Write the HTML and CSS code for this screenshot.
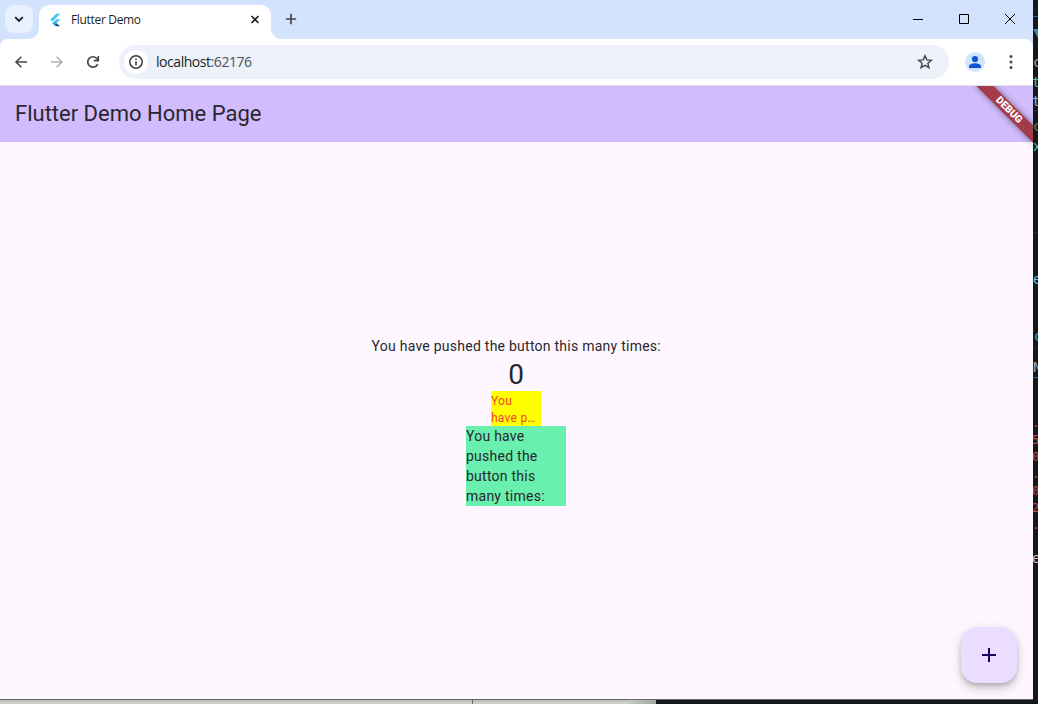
FILE: index.html
```
<!DOCTYPE html>
<html lang="en">
<head>
<meta charset="utf-8">
<title>Flutter Demo</title>
<link rel="stylesheet" href="styles.css">
</head>
<body>
<div class="desktop">
  <div class="window">
    <div class="tabstrip">
      <div class="tab-search"><svg width="28" height="28" viewBox="0 0 28 28"><path d="M10.2 12.2 14 16l3.8-3.8" fill="none" stroke="#1f1f1f" stroke-width="1.9"/></svg></div>
      <div class="tab">
        <svg class="favicon" width="16" height="16" viewBox="0 0 16 16"><path d="M9.3 1.7h4L5.4 9.6l-2-2z" fill="#42c5f5"/><path d="M9.3 7.2h4l-4 4-2-2z" fill="#42c5f5"/><path d="m5.4 11.2 2-2 2 2-2 2z" fill="#24a5e8"/><path d="m7.4 13.2 2-2 3.9 3.1h-4z" fill="#08539c"/></svg>
        <span class="tab-title">Flutter Demo</span>
        <svg class="tab-close" width="16" height="16" viewBox="0 0 16 16"><path d="m4.5 4 7 7m0-7-7 7" stroke="#1f1f1f" stroke-width="1.6"/></svg>
        <i class="flare flare-left"></i><i class="flare flare-right"></i>
      </div>
      <svg class="new-tab" width="16" height="16" viewBox="0 0 16 16"><path d="M8 2.8v10.4M2.8 8h10.4" stroke="#474747" stroke-width="1.7"/></svg>
      <svg class="controls" width="138" height="39" viewBox="0 0 138 39" fill="none" stroke="#000"><path d="M18 19.5h10M64.5 14.5h9v9h-9zM110 14l10 10m0-10-10 10"/></svg>
    </div>
    <div class="toolbar">
      <svg class="nav" width="16" height="16" viewBox="0 0 16 16"><path d="M14 8H3m5.4-5.3L3 8l5.4 5.3" fill="none" stroke="#474747" stroke-width="1.6"/></svg>
      <svg class="nav" width="16" height="16" viewBox="0 0 16 16"><path d="M2 8h11M7.6 2.7 13 8l-5.4 5.3" fill="none" stroke="#b0b0b0" stroke-width="1.6"/></svg>
      <svg class="nav" width="16" height="16" viewBox="0 0 16 16"><path d="M12.7 10.1a5.2 5.2 0 1 1-.6-5.3l.9 1.2" fill="none" stroke="#474747" stroke-width="1.7"/><path d="M13.3 2v4.6H8.8" fill="none" stroke="#474747" stroke-width="1.6"/></svg>
      <div class="omnibox">
        <div class="site-info"><svg width="16" height="16" viewBox="0 0 16 16"><circle cx="8" cy="8" r="6.2" fill="none" stroke="#3c3c3c" stroke-width="1.5"/><path d="M7.2 7.3h1.6v4H7.2zM7.2 4.5h1.6V6H7.2z" fill="#3c3c3c"/></svg></div>
        <span class="url">localhost<span class="port">:62176</span></span>
        <svg class="star" width="18" height="18" viewBox="0 0 18 18"><path d="m9 2.8 1.8 4.1 4.5.4-3.4 3 1 4.3L9 12.3l-3.9 2.3 1-4.3-3.4-3 4.5-.4z" fill="none" stroke="#474747" stroke-width="1.5"/></svg>
      </div>
      <svg class="avatar" width="20" height="20" viewBox="0 0 20 20"><circle cx="10" cy="10" r="10" fill="#d3e3fd"/><circle cx="10" cy="7" r="3.1" fill="#0b57d0"/><path d="M4 16v-1.5c0-2.2 3.5-3.3 6-3.3s6 1.1 6 3.3V16z" fill="#0b57d0"/></svg>
      <svg class="menu" width="16" height="16" viewBox="0 0 16 16" fill="#474747"><circle cx="8" cy="2.6" r="1.5"/><circle cx="8" cy="8" r="1.5"/><circle cx="8" cy="13.4" r="1.5"/></svg>
    </div>
    <div class="page">
      <header class="appbar">Flutter Demo Home Page</header>
      <main class="content">
        <p class="label">You have pushed the button this many times:</p>
        <p class="counter">0</p>
        <p class="yellow">You<br>have p…</p>
        <p class="green">You have<br>pushed the<br>button this<br>many times:</p>
      </main>
      <div class="banner">DEBUG</div>
      <div class="fab"><svg width="24" height="24" viewBox="0 0 24 24"><path d="M19 13h-6v6h-2v-6H5v-2h6V5h2v6h6z" fill="#21005d"/></svg></div>
    </div>
  </div>
  <svg class="editor" width="5" height="704" viewBox="0 0 5 704">
    <path d="M0 9.5h5M0 110.5h5M0 232.5h5M0 348.5h5" stroke="#24272b"/>
    <path d="M0 16.5h5M0 377.5h5" stroke="#12639f"/>
    <path d="M0 29h5v9z" fill="#3a88b0"/>
    <g class="code">
      <text x="0" y="67" fill="#c89a70">c</text><text x="-1" y="87" fill="#35c9ae">t</text><text x="-1" y="106" fill="#74b9e8">t</text>
      <text x="0" y="131" fill="#568b45">c</text><text x="0" y="151" fill="#35c9a0">x</text>
      <text x="0" y="284" fill="#70b8e8">e</text><text x="1" y="341" fill="#37a4d5">c</text><text x="0" y="372" fill="#a2adb5">N</text>
      <g class="digits" fill="#d04943"><text x="-1" y="427">.</text><text x="-1" y="444">5</text><text x="-1" y="461">0</text><text x="-1" y="478">.</text><text x="-1" y="495">0</text><text x="-1" y="512">2</text><text x="-1" y="529">.</text></g>
      <text x="-1" y="563" fill="#c5c5c5">e</text>
    </g>
  </svg>
  <div class="below"><i class="pane pane-a"></i><i class="pane pane-b"></i><i class="pane pane-c"></i></div>
</div>
</body>
</html>
```
FILE: styles.css
```
* { box-sizing: border-box; }
body { margin: 0; overflow: hidden; }
svg { display: block; flex: none; }
p { margin: 0; }
.desktop { width: 1038px; height: 704px; display: grid; grid-template: 700px 4px / 1033px 5px; background: #15181b; }
.window { display: flex; flex-direction: column; background: #d3e3fd; overflow: hidden; }
.tabstrip { height: 39px; flex: none; display: flex; }
.tab-search { width: 28px; height: 28px; margin: 5px 6px 0 5px; border-radius: 9px; background: #e9f1fe; }
.tab { position: relative; width: 232px; height: 34px; margin-top: 5px; padding: 0 8px 5px; display: flex; align-items: center; background: #fff; border-radius: 10px 10px 0 0; }
.tab-title { margin-left: 8px; flex: 1; font: 12px/16px "Open Sans", sans-serif; letter-spacing: -0.33px; color: #1f1f1f; }
.flare { position: absolute; bottom: 0; width: 10px; height: 10px; }
.flare-left { left: -10px; background: radial-gradient(circle at 0 0, transparent 9.5px, #fff 10px); }
.flare-right { right: -10px; background: radial-gradient(circle at 100% 0, transparent 9.5px, #fff 10px); }
.new-tab { margin: 11px 0 0 12px; }
.controls { margin-left: auto; }
.toolbar { height: 47px; flex: none; display: flex; align-items: center; padding: 0 14px 1px 13px; background: #fff; border-bottom: 1px solid #dfe1e6; border-radius: 8px 8px 0 0; }
.nav { margin-right: 20px; }
.nav + .nav + .nav { margin-right: 18px; }
.omnibox { width: 830px; height: 34px; display: flex; align-items: center; padding: 0 15px 0 5px; border-radius: 17px; background: #ecf1fa; }
.site-info { width: 24px; height: 24px; display: grid; place-items: center; border-radius: 50%; background: #fff; }
.url { margin-left: 8px; flex: 1; font: 14px/20px "Open Sans", sans-serif; letter-spacing: -0.45px; color: #1f1f1f; }
.port { color: #4d5156; }
.avatar { margin-left: 16px; }
.menu { margin-left: auto; }
.page { position: relative; flex: 1; display: flex; flex-direction: column; overflow: hidden; background: #fef7ff; border-bottom: 1px solid #69666a; font-family: Roboto, sans-serif; color: #29272d; }
.appbar { height: 56px; flex: none; padding-left: 15px; background: #d2bcfd; font-size: 22px; line-height: 55px; }
.content { flex: 1; display: flex; flex-direction: column; align-items: center; padding-top: 194px; font-size: 14px; line-height: 20px; letter-spacing: 0.25px; }
.label { padding-right: 0.5px; }
.counter { height: 35.4px; padding-right: 1px; font-size: 28px; line-height: 37px; letter-spacing: 0; }
.yellow { width: 50px; height: 34.2px; margin-left: -1px; padding-top: 1.6px; background: #ff0; color: #f44336; font-size: 12px; line-height: 17px; white-space: nowrap; }
.green { width: 100px; height: 80px; margin-left: -1px; background: #69f0ae; }
.banner { position: absolute; left: 969px; top: 18px; width: 80px; height: 12px; transform: rotate(45deg); background: #a33b49; box-shadow: 0 0 6px rgba(0, 0, 0, 0.5); color: #fff; font-size: 10.2px; font-weight: 900; line-height: 12px; text-align: center; }
.fab { position: absolute; right: 16px; bottom: 16px; width: 56px; height: 56px; display: grid; place-items: center; border-radius: 16px; background: #eaddff; box-shadow: 0 3px 5px -1px rgba(0,0,0,.2), 0 6px 10px rgba(0,0,0,.14), 0 1px 18px rgba(0,0,0,.06); }
.editor { grid-row: 1 / 3; grid-column: 2; overflow: hidden; }
.code { font: 14px "DejaVu Sans Mono", monospace; }
.digits { font-size: 12px; }
.below { grid-row: 2; grid-column: 1; display: flex; }
.pane { height: 4px; background: linear-gradient(#bbbcba, #d2d2d1); }
.pane-a { width: 473px; border-right: 1px solid #666; }
.pane-b { width: 157px; }
.pane-c { width: 26px; background: linear-gradient(90deg, #c2c4c1, #a5a7a2); }
```
